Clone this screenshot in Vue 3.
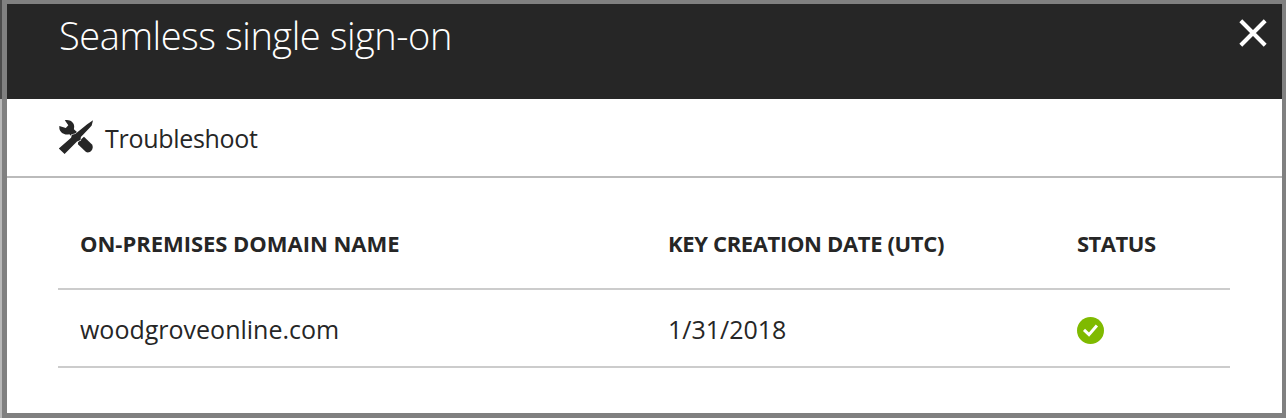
<script setup>
const rows = [{ domain: 'woodgroveonline.com', created: '1/31/2018' }]
</script>

<template>
  <div class="stage">
    <div class="edge"></div>
    <main class="blade">
      <header class="head">
        <h1 class="title">Seamless single sign-on</h1>
        <svg class="close" width="28" height="28" viewBox="0 0 28 28">
          <path d="M1.800 1.800 26.200 26.200M26.200 1.800 1.800 26.200" fill="none" stroke="#fff" stroke-width="4.100" />
        </svg>
      </header>
      <div class="toolbar">
        <svg class="tools" width="36" height="36" viewBox="0 0 36 36">
          <path fill="#262626" d="M6.800 1.200C11.500 0 16.400 3 16.200 7.800L15.900 10.300 20.300 14.200 15.300 18.800 11.300 15.200C7 16.600 2.200 14 1.400 9.800L1.300 7 7.800 8.900 10.300 6.200Z" />
          <path fill="#262626" d="M20.200 22.800 26 17.700 34 25.500C36.400 29.400 32.500 35 28 33.100L19.900 25.200Z" />
          <path fill="#262626" stroke="#fff" stroke-width="1.200" paint-order="stroke" d="M35 1.200 33.700 6.400 31.700 8.700 22.900 17.900 22.500 21.100 19 22.600 6.600 35 0.800 29.500 13.100 18.700 13.900 15.700 17.200 15.100 29.200 5.300Z" />
        </svg>
        <span class="label">Troubleshoot</span>
      </div>
      <section class="table">
        <div class="row names">
          <span class="c1">ON-PREMISES DOMAIN NAME</span>
          <span class="c2">KEY CREATION DATE (UTC)</span>
          <span class="c3">STATUS</span>
        </div>
        <div v-for="r in rows" :key="r.domain" class="row data">
          <span class="d1">{{ r.domain }}</span>
          <span class="d2">{{ r.created }}</span>
          <svg class="ok" width="28" height="28" viewBox="0 0 28 28">
            <circle cx="13.500" cy="13.500" r="13.500" fill="#7fba00" />
            <path d="M7 12.900 12 17.700 19.900 8.600" fill="none" stroke="#fff" stroke-width="3" />
          </svg>
        </div>
      </section>
    </main>
  </div>
</template>

<style>
body { margin: 0; }
</style>

<style scoped>
.stage { display: flex; width: 1286px; height: 418px; overflow: hidden; color: #262626; font-family: "Open Sans", "Noto Sans", sans-serif; }
.edge { width: 2px; background: linear-gradient(#4c4c4c 99px, #b9b9b9 99px); }
.blade { box-sizing: border-box; width: 1284px; height: 418px; border: solid #808080; border-width: 4px 4px 5px 5px; background: #fff; }
.head { display: flex; justify-content: space-between; height: 95px; background: #262626; }
.title { margin: 3px 0 0 52px; font-size: 38px; line-height: 56px; font-weight: 300; letter-spacing: -0.45px; color: #fff; white-space: nowrap; }
.close { margin: 15px 15px 0 0; }
.toolbar { box-sizing: border-box; display: flex; height: 79px; border-bottom: 2px solid #bbb; padding-left: 51px; }
.tools { margin-top: 20px; }
.label { margin: 19px 0 0 11px; font-size: 25px; line-height: 40px; letter-spacing: -0.3px; }
.table { margin: 22px 52px 0 51px; }
.row { box-sizing: border-box; display: grid; grid-template-columns: 588px 409px 1fr; padding-left: 22px; border-bottom: 2px solid #ccc; white-space: nowrap; }
.names { height: 90px; padding-top: 23px; font-size: 22px; line-height: 40px; font-weight: 700; }
.c1 { letter-spacing: -0.03px; }
.c2 { letter-spacing: -0.35px; }
.c3 { letter-spacing: -0.5px; }
.data { height: 78px; padding-top: 19px; font-size: 25px; line-height: 40px; }
.ok { margin-top: 8px; }
</style>
